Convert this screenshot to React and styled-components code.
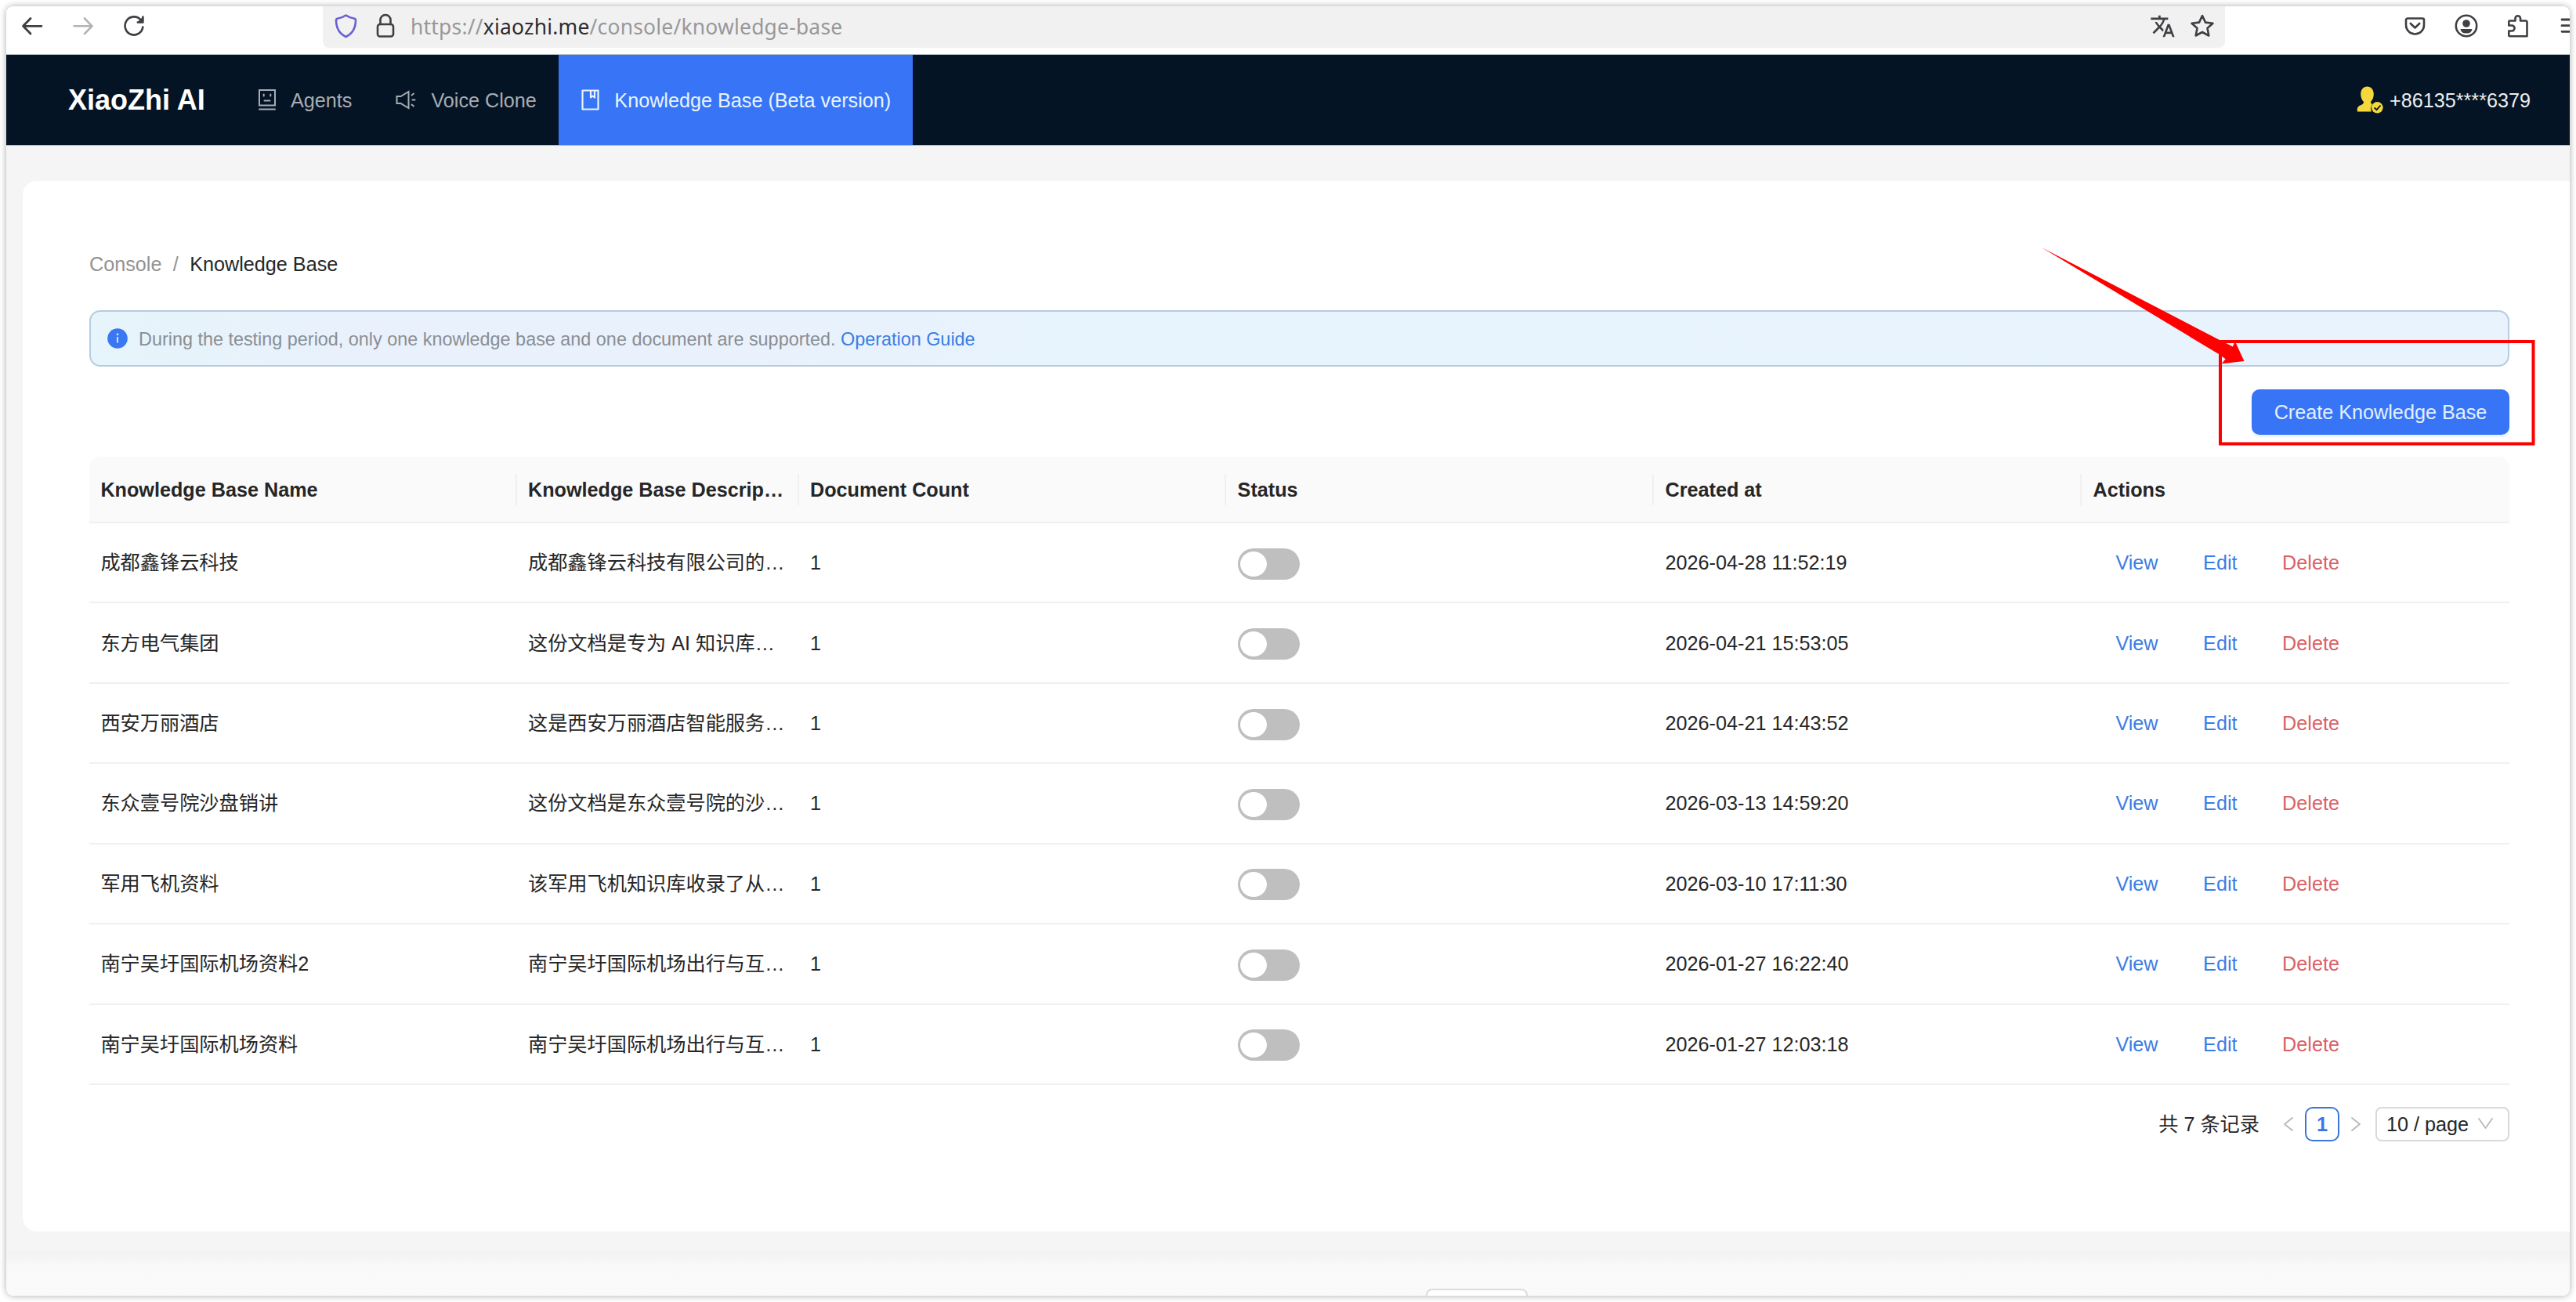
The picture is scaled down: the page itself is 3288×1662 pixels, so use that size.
import React from 'react';
import styled, { createGlobalStyle } from 'styled-components';
import { MdTranslate } from 'react-icons/md';

const GlobalStyle = createGlobalStyle`
  * {
    box-sizing: border-box;
  }

  body {
    margin: 0;
    background: #fff;
    font-family: "Liberation Sans", "Noto Sans CJK SC", sans-serif;
    font-size: 25.2px;
    line-height: 40px;
    color: #262626;
  }
`;

const Page = styled.div`
  position: relative;
  width: 3288px;
  height: 1662px;
  padding: 8px;
  overflow: hidden;
`;

const Window = styled.div`
  display: flex;
  flex-direction: column;
  height: 1646px;
  border-radius: 9px;
  overflow: hidden;
  background: #f5f5f5;
`;

const WindowShadow = styled.div`
  border-radius: 9px;
  box-shadow: 0 0 9px rgba(0, 0, 0, 0.34);
`;

/* browser toolbar */

const Toolbar = styled.div`
  display: flex;
  align-items: flex-start;
  flex: none;
  height: 62px;
  background: #fff;
  border-bottom: 1px solid #b9c3ca;
  color: #3f3f44;
`;

const NavButtons = styled.div`
  display: flex;
  flex: none;
  gap: 38px;
  width: 404px;
  padding: 11px 0 0 19px;
`;

const UrlBar = styled.div`
  display: flex;
  align-items: flex-start;
  flex: none;
  width: 2428px;
  height: 53px;
  padding: 9px 13px 0 15px;
  background: #f1f1f1;
  border-radius: 0 0 8px 8px;
`;

const UrlText = styled.div`
  flex: 1;
  margin-left: 20px;
  height: 34px;
  line-height: 34px;
  font-family: "Noto Sans", sans-serif;
  font-size: 26.4px;
  letter-spacing: 0.23px;
  color: #98989a;
  white-space: nowrap;

  b {
    font-weight: 400;
    color: #2c2c30;
  }
`;

const UrlIcons = styled.div`
  display: flex;
  gap: 18px;
`;

const ToolbarIcons = styled.div`
  display: flex;
  flex: none;
  gap: 37px;
  padding: 9px 0 0 229px;
`;

/* site header */

const Header = styled.header`
  display: flex;
  align-items: center;
  flex: none;
  height: 116px;
  padding: 0 50px 0 79px;
  border-bottom: 1px solid #aab5bd;
  background: #041424;
`;

const Logo = styled.div`
  width: 215px;
  font-size: 36px;
  font-weight: 700;
  color: #fff;
  white-space: nowrap;
`;

const MenuItem = styled.div`
  display: flex;
  align-items: center;
  height: 115px;
  padding: 0 28px 0 ${({ $active }) => ($active ? 29.5 : 28)}px;
  color: ${({ $active }) => ($active ? '#e8f3ff' : '#a7adb3')};
  background: ${({ $active }) => ($active ? '#3875f6' : 'transparent')};
  white-space: nowrap;

  svg {
    margin-right: 19px;
  }
`;

const User = styled.div`
  display: flex;
  align-items: center;
  gap: 8px;
  margin-left: auto;
  color: #eceef0;
`;

/* content */

const Card = styled.main`
  flex: none;
  height: 1341px;
  margin: 45px 0 0 21px;
  padding: 86px 77px 0 85px;
  background: #fff;
  border-radius: 18px 0 0 18px;
`;

const Breadcrumb = styled.div`
  display: flex;
  height: 40px;
`;

const Crumb = styled.span`
  color: ${({ $muted }) => ($muted ? '#929292' : '#262626')};

  & + & {
    margin-left: 14.4px;
  }
`;

const Notice = styled.div`
  display: flex;
  align-items: center;
  height: 72px;
  margin-top: 39px;
  padding: 0 21px;
  border: 2px solid #b6cce0;
  border-radius: 14px;
  background: linear-gradient(90deg, #e6f4fb, #e9f1fc 12%, #e9f1fc 24%, #e7f3fd 40%, #e8f3fd);
  font-size: 23.4px;
  color: #8a8e94;

  svg {
    margin-right: 14px;
  }
`;

const NoticeText = styled.div`
  padding-top: 2px;
`;

const Link = styled.a`
  color: #3b7de4;
`;

const CardActions = styled.div`
  display: flex;
  justify-content: flex-end;
  margin-top: 29px;
`;

const PrimaryButton = styled.button`
  width: 329px;
  height: 58px;
  padding: 0;
  border: 0;
  border-radius: 10px;
  background: #3875f6;
  box-shadow: 0 3px 2px rgba(56, 160, 246, 0.12);
  font: inherit;
  color: #e4f0ff;
`;

const Table = styled.div`
  margin-top: 28px;
`;

const Row = styled.div`
  display: grid;
  grid-template-columns: 545.6px 360px 545.6px 546px 546px 1fr;
  align-items: center;
  height: 102.43px;
  border-bottom: 2px solid #f0f0f0;
`;

const HeadRow = styled(Row)`
  height: 85px;
  background: #fafafa;
  border-radius: 14px 14px 0 0;
  font-weight: 700;
`;

const Cell = styled.div`
  padding: 0 14.4px;
  overflow: hidden;
  white-space: nowrap;
`;

const HeadCell = styled(Cell)`
  border-right: 2px solid #f0f0f0;

  &:last-child {
    border-right: 0;
  }
`;

const Switch = styled.span`
  display: block;
  width: 79px;
  height: 40px;
  margin-top: 3px;
  padding: 4px 3px;
  border-radius: 20px;
  background: #bfbfbf;

  &::before {
    content: '';
    display: block;
    width: 34px;
    height: 32px;
    border-radius: 50%;
    background: #fff;
  }
`;

const LinkButton = styled.span`
  display: inline-block;
  padding: 0 28.8px;
  color: ${({ $danger }) => ($danger ? '#dc6065' : '#3b7de4')};
`;

const Pagination = styled.div`
  display: flex;
  justify-content: flex-end;
  align-items: center;
  margin-top: 28px;
`;

const Total = styled.span`
  margin-right: 30px;
`;

const PageNumber = styled.span`
  width: 44px;
  height: 44px;
  margin: 0 15px;
  border: 2px solid #3b76d8;
  border-radius: 10px;
  text-align: center;
  font-weight: 700;
  color: #3b76e8;
`;

const PageSize = styled.span`
  display: flex;
  align-items: center;
  justify-content: space-between;
  width: 171px;
  height: 44px;
  margin-left: 18px;
  padding: 0 19px 0 12px;
  border: 2px solid #d9d9d9;
  border-radius: 8px;
`;

const Footer = styled.footer`
  display: flex;
  flex: 1;
  margin-top: 24px;
  padding: 49px 0 0 1812px;
  background: linear-gradient(#f3f3f3, #f3f3f3 6px, #f9f9f9 20px, #fafafa);
`;

const FooterTab = styled.div`
  width: 130px;
  height: 30px;
  border: 2px solid #dcdcdc;
  border-radius: 8px;
  background: #fff;
`;

/* red marks over the page */

const Marks = styled.svg`
  position: absolute;
  left: 2600px;
  top: 310px;
`;

const Icon = ({ w, h, stroke = 2.6, children }) => (
  <svg
    width={w}
    height={h}
    viewBox={`0 0 ${w} ${h}`}
    fill="none"
    stroke="currentColor"
    strokeWidth={stroke}
    strokeLinecap="round"
    strokeLinejoin="round"
  >
    {children}
  </svg>
);

const BackIcon = () => (
  <Icon w={28} h={28} stroke={2.8}>
    <path d="M26 14.3H3M12 4.5L2.5 14.3L12 24" />
  </Icon>
);

const ForwardIcon = () => (
  <Icon w={26} h={28}>
    <path stroke="#b3b3b5" d="M1.5 14.3H24M15 4.5L24.5 14.3L15 24" />
  </Icon>
);

const ReloadIcon = () => (
  <Icon w={28} h={28}>
    <path d="M22.5 6.2A11.4 11.6 0 1 0 25.3 15.5" />
    <path d="M25.5 2.2V9.8H18Z" fill="currentColor" stroke="none" />
    <path d="M25.4 2.5V9.5H18.8" />
  </Icon>
);

const ShieldIcon = () => (
  <Icon w={29} h={32}>
    <path
      stroke="#6a5fd0"
      d="M14.5 2.5C11 5 7 6.3 3.5 6.8C2.3 7 2 7.5 2 8.5C2 18.500 5 25.500 14.500 30C24 25.500 27 18.500 27 8.500C27 7.500 26.700 7 25.500 6.800C22 6.300 18 5 14.500 2.500Z"
    />
  </Icon>
);

const LockIcon = () => (
  <Icon w={24} h={32}>
    <rect x="2" y="14" width="20" height="15.5" rx="3" />
    <path d="M5.5 14V8.5A6.5 6.5 0 0 1 18.5 8.5V14" />
  </Icon>
);

const StarIcon = () => (
  <Icon w={32} h={32}>
    <path d="M16 3L20 11.6L29.5 12.8L22.5 19L24.3 28.5L16 24L7.7 28.5L9.5 19L2.5 12.8L12 11.6Z" />
  </Icon>
);

const PocketIcon = () => (
  <Icon w={27} h={32}>
    <path d="M4 6.5H23A2 2 0 0 1 25 8.5V15A11.5 11.5 0 0 1 2 15V8.5A2 2 0 0 1 4 6.5Z" />
    <path d="M7.8 13L13.5 18.5L19.2 13" />
  </Icon>
);

const AccountIcon = () => (
  <Icon w={30} h={32}>
    <circle cx="15" cy="16" r="13.2" />
    <circle cx="15" cy="13" r="4.8" fill="currentColor" stroke="none" />
    <path d="M7.5 20H22.5Q22 25.5 15 25.5Q8 25.5 7.5 20Z" fill="currentColor" stroke="none" />
  </Icon>
);

const PuzzleIcon = () => (
  <Icon w={28} h={32}>
    <path d="M3.5 9.5H10.5V6A3.3 3.3 0 0 1 17 6V9.500H23.500Q25.500 9.500 25.500 11.500V29.300H3.500Q2.300 29.300 2.300 28V22.500H6A3.500 3.500 0 0 0 6 15.500H2.300V11Q2.300 9.500 3.500 9.500Z" />
  </Icon>
);

const MenuIcon = () => (
  <Icon w={26} h={32} stroke={2.8}>
    <path d="M5 8H26M5 15.7H26M5 23.3H26" />
  </Icon>
);

const AgentIcon = () => (
  <Icon w={22} h={27} stroke={2}>
    <path strokeLinejoin="miter" d="M1 1H21V20.5H1ZM1 25.5H21M7.5 14.5H14.5" />
    <path d="M6.7 6.5V8.5M15.3 6.5V8.5" />
  </Icon>
);

const VoiceIcon = () => (
  <Icon w={26} h={25} stroke={2}>
    <path strokeLinejoin="miter" d="M1.5 8V17H6.5L16.5 23V2L6.5 8Z" />
    <path d="M20.500 6.500L23 4.500M21.500 12.500H24.500M20.500 18.500L23 20.500" />
  </Icon>
);

const BookIcon = () => (
  <Icon w={23} h={27} stroke={2.2}>
    <path d="M1.5 1.5H21.5V25.5H1.5Z" />
    <path d="M12 2V10.5L14.5 8.5L17 10.5V2" />
  </Icon>
);

const UserIcon = () => (
  <svg width="34" height="35" viewBox="0 0 34 35">
    <path
      d="M13.5 0.5C18.5 0.5 21.8 4.5 21.8 10C21.8 14 20.5 17.5 18.2 19.5C17.8 21.5 18.5 22.3 20 23C18 26 17.5 29 18.8 32.5H1C0.5 29.5 0.8 26.5 3.5 25C6 23.7 9 23.3 9 20C6.5 17.5 5.2 14 5.2 10C5.2 4.5 8.5 0.5 13.5 0.5Z"
      fill="#f4d83c"
    />
    <circle cx="26.3" cy="27.3" r="7.3" fill="#f4d83c" />
    <path d="M22.5 27.3L25.5 30.2L30.5 24.5" fill="none" stroke="#041424" strokeWidth="1.8" />
  </svg>
);

const InfoIcon = () => (
  <svg width="26" height="26" viewBox="0 0 26 26">
    <circle cx="13" cy="13" r="12.8" fill="#3a78f2" />
    <path d="M13 11V18.5" stroke="#cfe2ff" strokeWidth="2" />
    <circle cx="13" cy="7.8" r="1.4" fill="#cfe2ff" />
  </svg>
);

const ArrowIcon = ({ d, w = 13, h = 18 }) => (
  <Icon w={w} h={h} stroke={1.8}>
    <path stroke="#b8b8b8" d={d} />
  </Icon>
);

const columns = [
  'Knowledge Base Name',
  'Knowledge Base Descrip…',
  'Document Count',
  'Status',
  'Created at',
  'Actions',
];

const rows = [
  { name: '成都鑫锋云科技', desc: '成都鑫锋云科技有限公司的…', created: '2026-04-28 11:52:19' },
  { name: '东方电气集团', desc: '这份文档是专为 AI 知识库…', created: '2026-04-21 15:53:05' },
  { name: '西安万丽酒店', desc: '这是西安万丽酒店智能服务…', created: '2026-04-21 14:43:52' },
  { name: '东众壹号院沙盘销讲', desc: '这份文档是东众壹号院的沙…', created: '2026-03-13 14:59:20' },
  { name: '军用飞机资料', desc: '该军用飞机知识库收录了从…', created: '2026-03-10 17:11:30' },
  { name: '南宁吴圩国际机场资料2', desc: '南宁吴圩国际机场出行与互…', created: '2026-01-27 16:22:40' },
  { name: '南宁吴圩国际机场资料', desc: '南宁吴圩国际机场出行与互…', created: '2026-01-27 12:03:18' },
];

const SecurityIcons = styled.div`
  display: flex;
  gap: 24px;
`;

const BrowserToolbar = () => (
  <Toolbar>
    <NavButtons>
      <BackIcon />
      <ForwardIcon />
      <ReloadIcon />
    </NavButtons>
    <UrlBar>
      <SecurityIcons>
        <ShieldIcon />
        <LockIcon />
      </SecurityIcons>
      <UrlText>
        https://<b>xiaozhi.me</b>/console/knowledge-base
      </UrlText>
      <UrlIcons>
        <MdTranslate size={33} />
        <StarIcon />
      </UrlIcons>
    </UrlBar>
    <ToolbarIcons>
      <PocketIcon />
      <AccountIcon />
      <PuzzleIcon />
      <MenuIcon />
    </ToolbarIcons>
  </Toolbar>
);

const KnowledgeTable = () => (
  <Table>
    <HeadRow>
      {columns.map((title) => (
        <HeadCell key={title}>{title}</HeadCell>
      ))}
    </HeadRow>
    {rows.map((row) => (
      <Row key={row.created}>
        <Cell>{row.name}</Cell>
        <Cell>{row.desc}</Cell>
        <Cell>1</Cell>
        <Cell>
          <Switch />
        </Cell>
        <Cell>{row.created}</Cell>
        <Cell>
          <LinkButton>View</LinkButton>
          <LinkButton>Edit</LinkButton>
          <LinkButton $danger>Delete</LinkButton>
        </Cell>
      </Row>
    ))}
  </Table>
);

const App = () => (
  <Page>
    <GlobalStyle />
    <WindowShadow>
      <Window>
        <BrowserToolbar />
        <Header>
          <Logo>XiaoZhi AI</Logo>
          <MenuItem>
            <AgentIcon />
            Agents
          </MenuItem>
          <MenuItem>
            <VoiceIcon />
            Voice Clone
          </MenuItem>
          <MenuItem $active>
            <BookIcon />
            Knowledge Base (Beta version)
          </MenuItem>
          <User>
            <UserIcon />
            +86135****6379
          </User>
        </Header>
        <Card>
          <Breadcrumb>
            <Crumb $muted>Console</Crumb>
            <Crumb $muted>/</Crumb>
            <Crumb>Knowledge Base</Crumb>
          </Breadcrumb>
          <Notice>
            <InfoIcon />
            <NoticeText>
              During the testing period, only one knowledge base and one document are supported.{' '}
              <Link>Operation Guide</Link>
            </NoticeText>
          </Notice>
          <CardActions>
            <PrimaryButton>Create Knowledge Base</PrimaryButton>
          </CardActions>
          <KnowledgeTable />
          <Pagination>
            <Total>共 7 条记录</Total>
            <ArrowIcon d="M12 1L2 9L12 17" />
            <PageNumber>1</PageNumber>
            <ArrowIcon d="M1 1L11 9L1 17" />
            <PageSize>
              10 / page
              <ArrowIcon d="M1 1L9.5 13L18 1" w={19} h={15} />
            </PageSize>
          </Pagination>
        </Card>
        <Footer>
          <FooterTab />
        </Footer>
      </Window>
    </WindowShadow>
    <Marks width="640" height="262" viewBox="2600 310 640 262">
      <rect x="2834" y="436" width="399.5" height="130.5" fill="none" stroke="#f00" strokeWidth="4" />
      <path
        d="M2606 316L2833 434L2850 442.5L2852.7 435.500L2864.500 461L2835.700 464.300L2840.700 458.300L2832 452Z"
        fill="#f00"
      />
    </Marks>
  </Page>
);

export default App;
